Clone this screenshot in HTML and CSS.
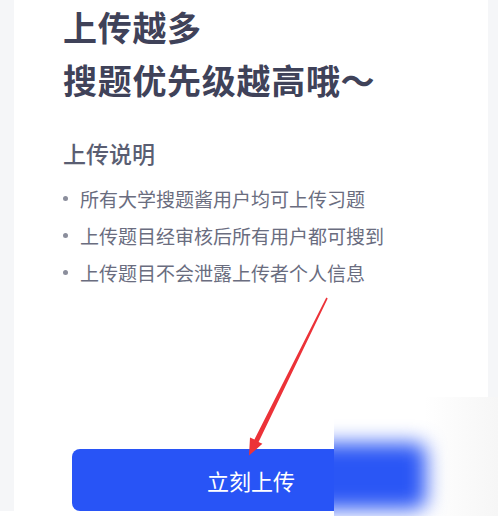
FILE: index.html
```html
<!DOCTYPE html>
<html lang="zh-CN">
<head>
<meta charset="utf-8">
<link rel="stylesheet" href="styles.css">
</head>
<body>
<div class="page">
  <div class="card">
    <h1 class="title">上传越多<br>搜题优先级越高哦～</h1>
    <h2 class="subtitle">上传说明</h2>
    <ul class="list">
      <li>所有大学搜题酱用户均可上传习题</li>
      <li>上传题目经审核后所有用户都可搜到</li>
      <li>上传题目不会泄露上传者个人信息</li>
    </ul>
    <button class="upload">立刻上传</button>
  </div>
</div>
<div class="bottom"></div>
<svg class="arrow" width="498" height="516" viewBox="0 0 498 516">
  <polygon points="326.3,297.5 327.7,298.5 258.6,442 262.4,443.8 249,455.5 250,437.4 254.4,439.6" fill="#ec3238"/>
</svg>
<div class="mask"><div class="blob"></div></div>
</body>
</html>
```
FILE: styles.css
```css
* { box-sizing: border-box; }
html, body { margin: 0; padding: 0; }
body {
  width: 498px;
  height: 516px;
  overflow: hidden;
  background: #ffffff;
  font-family: "Noto Sans CJK SC", "Noto Sans", sans-serif;
  position: relative;
}
.page {
  height: 511px;
  background: #f5f6f8;
  padding: 0 10px 0 14px;
}
.card {
  height: 511px;
  background: #ffffff;
  display: flex;
  flex-direction: column;
  padding: 0 0 0 49px;
}
.title {
  margin: 0;
  font-size: 34px;
  line-height: 53px;
  font-weight: 700;
  color: #3f4259;
  letter-spacing: 0.7px;
}
.subtitle {
  margin: 32px 0 0;
  font-size: 23px;
  line-height: 30px;
  font-weight: 500;
  color: #5a5e72;
}
.list {
  list-style: none;
  margin: 12px 0 0;
  padding: 0;
}
.list li {
  font-size: 19px;
  line-height: 37px;
  color: #6a6d7f;
  display: flex;
  align-items: center;
}
.list li::before {
  content: "";
  width: 5px;
  height: 5px;
  border-radius: 50%;
  background: #8b8e9c;
  margin: 0 12px 0 0;
  flex: none;
}
.upload {
  margin: auto 58px 0 9px;
  height: 62px;
  border: none;
  border-radius: 8px;
  background: #2854f6;
  color: #ffffff;
  font-family: "Noto Sans CJK SC", "Noto Sans", sans-serif;
  font-size: 22px;
  font-weight: 400;
  padding: 0;
}
.bottom { height: 5px; background: #ffffff; }
.arrow {
  position: absolute;
  left: 0;
  top: 0;
  pointer-events: none;
}
.mask {
  position: absolute;
  left: 334px;
  top: 397px;
  width: 164px;
  height: 119px;
  background: linear-gradient(90deg, #ffffff 55%, #f6f6f6 100%);
  overflow: hidden;
}
.blob {
  position: absolute;
  left: -30px;
  top: 46px;
  width: 122px;
  height: 66px;
  background: #2a56f5;
  border-radius: 10px;
  filter: blur(10px);
}
```
